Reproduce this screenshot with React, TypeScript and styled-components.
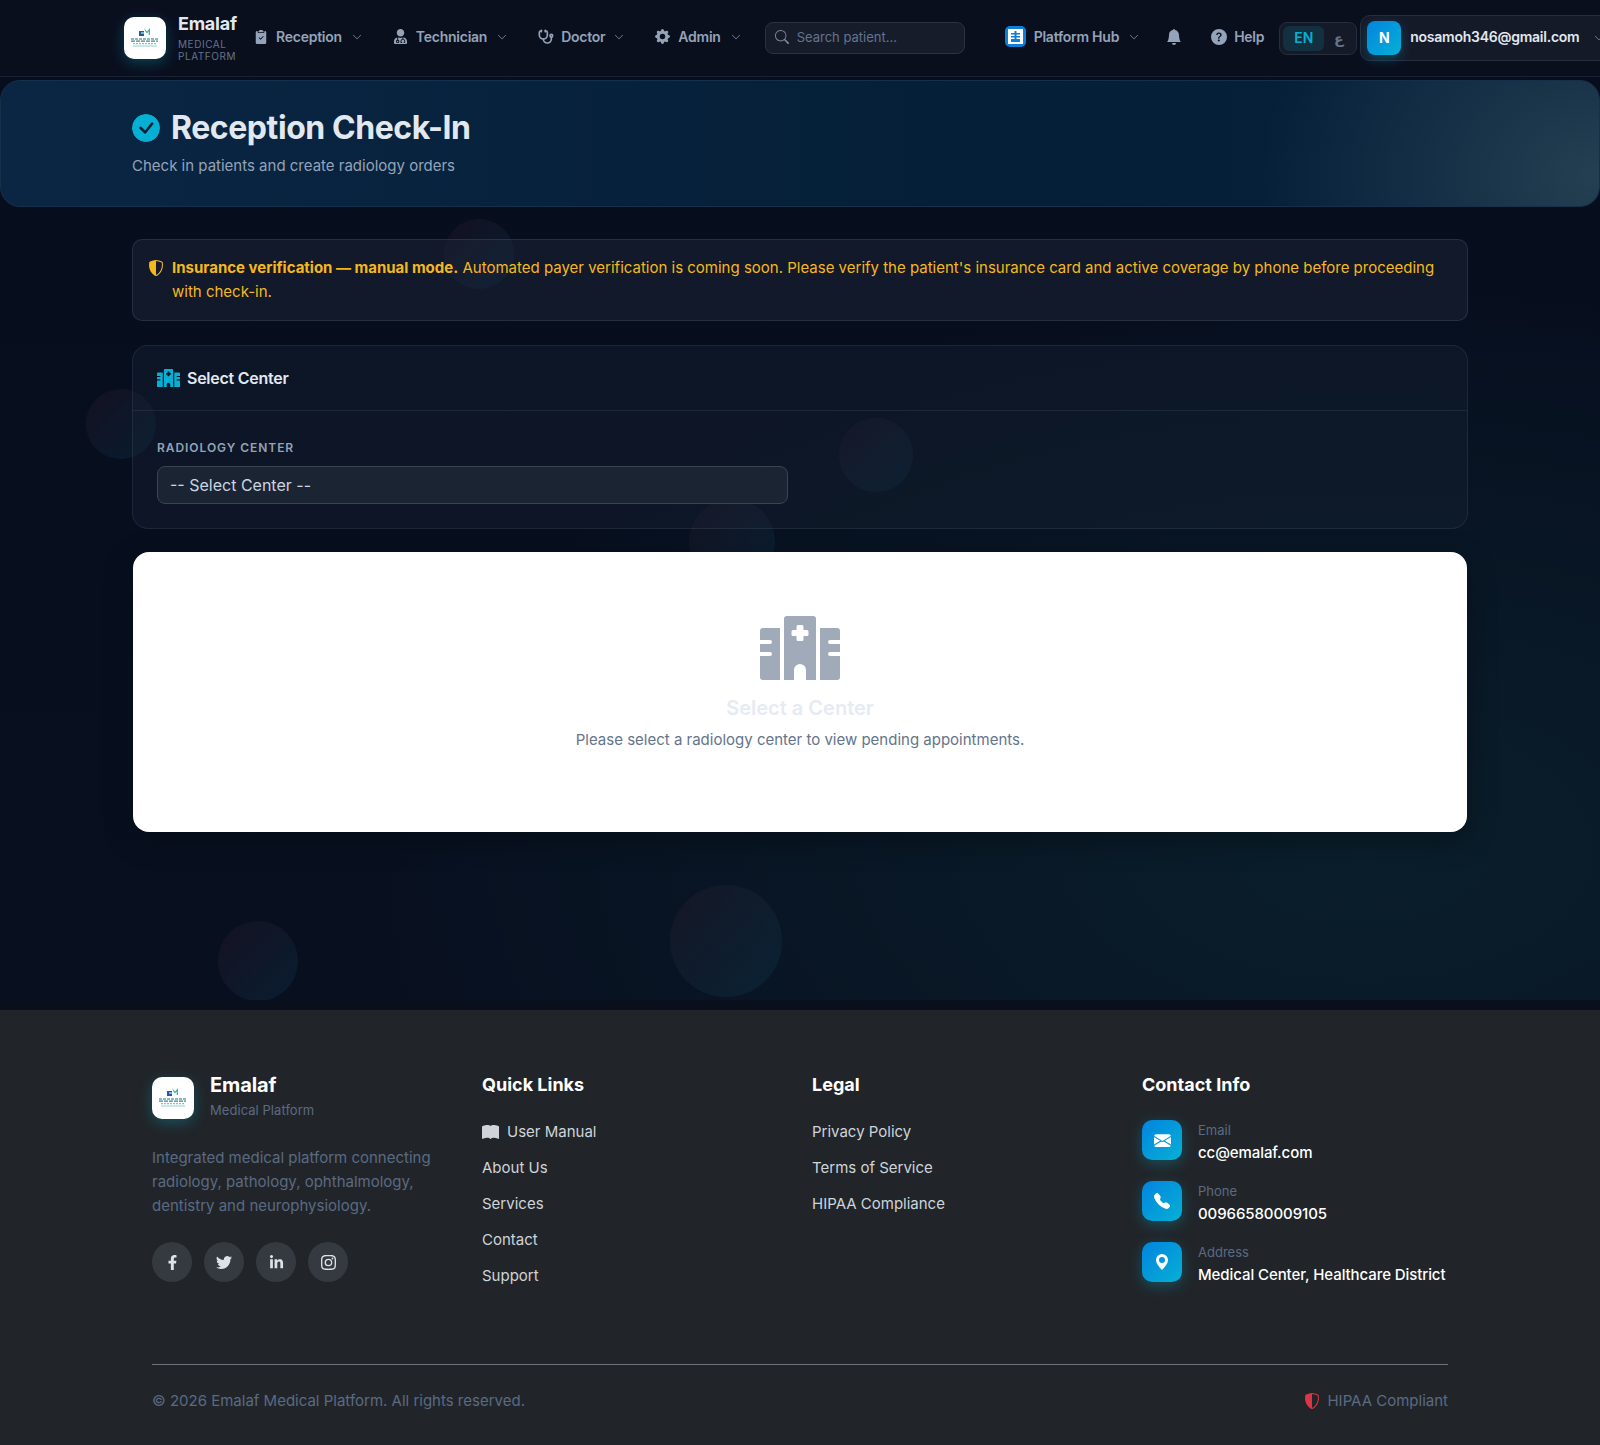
import React from 'react';
import styled, { createGlobalStyle } from 'styled-components';
import {
    BsBellFill,
    BsBookFill,
    BsCheckCircleFill,
    BsChevronDown,
    BsClipboard2CheckFill,
    BsEnvelopeFill,
    BsGearFill,
    BsGeoAltFill,
    BsInstagram,
    BsQuestionCircleFill,
    BsSearch,
    BsShieldShaded,
    BsTelephoneFill,
    BsTwitter,
} from 'react-icons/bs';
import { FaFacebookF, FaLinkedinIn, FaUserMd } from 'react-icons/fa';
import { Stethoscope } from 'lucide-react';

const GlobalStyle = createGlobalStyle`
    * {
        box-sizing: border-box;
    }
    html, body {
        margin: 0;
        padding: 0;
        background: #0a0f1e;
    }
    body {
        font-family: Inter, "Liberation Sans", "DejaVu Sans", sans-serif;
    }
`;

const Shell = styled.div`
    position: relative;
    height: 1000px;
    overflow: hidden;
    background:
        radial-gradient(ellipse 1000px 560px at 85% 85%, #0a1e2b 0%, rgba(10, 30, 43, 0) 100%),
        linear-gradient(180deg, #060e1e 0%, #081020 100%);
`;

const Bubble = styled.div<{ $x: number; $y: number; $r: number }>`
    position: absolute;
    left: ${({ $x, $r }) => $x - $r}px;
    top: ${({ $y, $r }) => $y - $r}px;
    width: ${({ $r }) => $r * 2}px;
    height: ${({ $r }) => $r * 2}px;
    border-radius: 50%;
    background: linear-gradient(135deg, rgba(220, 53, 69, 0.06), rgba(13, 148, 190, 0.1));
`;

const TopBar = styled.header`
    position: relative;
    height: 77px;
    padding-left: 124px;
    display: flex;
    align-items: center;
    background: #0a0f1e;
    border-bottom: 1px solid #1a2233;
    white-space: nowrap;
    overflow: hidden;
`;

const LogoTile = styled.div`
    width: 42px;
    height: 42px;
    flex: none;
    border-radius: 10px;
    background: white;
    display: flex;
    align-items: center;
    justify-content: center;
    box-shadow: 0 4px 14px rgba(6, 182, 212, 0.3);
`;

const Brand = styled.div`
    margin-left: 12px;
    width: 64px;
    flex: none;
    strong {
        display: block;
        font-size: 18px;
        line-height: 20px;
        font-weight: 700;
        letter-spacing: -0.25px;
        color: #e2e8f0;
    }
    span {
        display: block;
        margin-top: 4px;
        font-size: 10px;
        line-height: 12px;
        letter-spacing: 0.55px;
        color: #64748b;
        white-space: normal;
    }
`;

const NavItem = styled.div<{ $gap?: number; $tight?: boolean }>`
    display: flex;
    align-items: center;
    height: 32px;
    padding-bottom: 3px;
    margin-left: ${({ $gap }) => $gap ?? 31}px;
    gap: ${({ $tight }) => ($tight ? 7 : 8)}px;
    font-size: 14px;
    font-weight: 600;
    letter-spacing: -0.25px;
    color: #94a3b8;
    svg {
        flex: none;
    }
`;

const Chevron = styled(BsChevronDown)`
    width: 10px;
    height: 10px;
    margin-left: 2px;
`;

const SearchBox = styled.div`
    width: 200px;
    height: 32px;
    margin-left: 24px;
    flex: none;
    display: flex;
    align-items: center;
    gap: 8px;
    padding: 0 9px 2px;
    border-radius: 8px;
    background: #171c2b;
    border: 1px solid #2b3240;
    font-size: 13px;
    color: #64748b;
    svg {
        color: #7b8798;
    }
`;

const HubTile = styled.div`
    width: 21px;
    height: 21px;
    border-radius: 5px;
    background: #0d7fd8;
    display: flex;
    align-items: center;
    justify-content: center;
`;

const LangSwitch = styled.div`
    margin-left: 15px;
    width: 78px;
    height: 33px;
    flex: none;
    padding: 3px;
    display: flex;
    align-items: center;
    border-radius: 8px;
    background: #141a28;
    border: 1px solid #272e3d;
    font-size: 14px;
    font-weight: 600;
`;

const LangOption = styled.span<{ $active?: boolean }>`
    flex: ${({ $active }) => ($active ? '0 0 41px' : '1')};
    height: 25px;
    padding-bottom: ${({ $active }) => ($active ? 2 : 0)}px;
    display: flex;
    align-items: center;
    justify-content: center;
    border-radius: 6px;
    color: ${({ $active }) => ($active ? '#06b0d4' : '#64748b')};
    background: ${({ $active }) => ($active ? '#12303f' : 'transparent')};
`;

const UserBox = styled.div`
    margin-left: 3px;
    height: 46px;
    width: 300px;
    flex: none;
    padding-left: 6px;
    display: flex;
    align-items: center;
    gap: 9px;
    border-radius: 10px;
    background: #151a29;
    border: 1px solid #272e3d;
    font-size: 14px;
    font-weight: 600;
    letter-spacing: -0.25px;
    color: #e2e8f0;
    svg {
        margin-left: 6px;
        flex: none;
        color: #94a3b8;
    }
`;

const UserEmail = styled.span`
    padding-bottom: 3px;
`;

const Avatar = styled.div`
    width: 34px;
    height: 34px;
    padding-bottom: 2px;
    border-radius: 8px;
    display: flex;
    align-items: center;
    justify-content: center;
    font-weight: 700;
    color: white;
    background: linear-gradient(135deg, #0284e0, #06b0d4);
    box-shadow: 0 4px 12px rgba(6, 176, 212, 0.3);
`;

const Main = styled.main`
    position: relative;
    padding-top: 3px;
`;

const Hero = styled.section`
    height: 127px;
    padding: 28px 131px 0;
    border-radius: 20px;
    border: 1px solid #17304a;
    background:
        radial-gradient(ellipse 340px 260px at 100% 75%, rgba(90, 120, 125, 0.36), rgba(90, 120, 125, 0) 100%),
        linear-gradient(90deg, #0a2643 0%, #051f38 60%, #06203a 100%);
`;

const HeroTitle = styled.h1`
    margin: 0;
    display: flex;
    align-items: center;
    gap: 11px;
    font-size: 32px;
    line-height: 38px;
    font-weight: 700;
    letter-spacing: -0.43px;
    color: #e2e8f0;
    svg {
        color: #06b0d4;
        background: radial-gradient(circle, #0a1f33 45%, transparent 46%);
        border-radius: 50%;
    }
`;

const HeroSub = styled.p`
    margin: 9px 0 0;
    font-size: 15px;
    line-height: 20px;
    color: #94a3b8;
`;

const Content = styled.div`
    width: 1336px;
    margin: 32px auto 0;
    display: flex;
    flex-direction: column;
`;

const Notice = styled.div`
    min-height: 82px;
    padding: 16px 24px 13px 39px;
    position: relative;
    border-radius: 10px;
    background: rgba(30, 41, 59, 0.45);
    border: 1px solid rgba(148, 163, 184, 0.16);
    font-size: 15px;
    line-height: 24px;
    color: #f5b81c;
    svg {
        position: absolute;
        left: 15px;
        top: 20px;
    }
    strong {
        font-weight: 700;
    }
`;

const Panel = styled.section`
    margin-top: 24px;
    height: 184px;
    border-radius: 16px;
    background: rgba(30, 41, 59, 0.28);
    border: 1px solid rgba(148, 163, 184, 0.12);
`;

const PanelHeader = styled.div`
    height: 65px;
    padding-left: 24px;
    display: flex;
    align-items: center;
    gap: 7px;
    border-bottom: 1px solid rgba(148, 163, 184, 0.12);
    font-size: 16px;
    font-weight: 600;
    letter-spacing: -0.25px;
    color: #e2e8f0;
    svg {
        color: #06b0d4;
    }
`;

const PanelBody = styled.div`
    padding: 29px 24px 0;
`;

const FieldLabel = styled.label`
    display: block;
    font-size: 12px;
    line-height: 16px;
    font-weight: 600;
    letter-spacing: 0.95px;
    text-transform: uppercase;
    color: #94a3b8;
`;

const CenterSelect = styled.select`
    display: block;
    margin-top: 10px;
    width: 631px;
    height: 38px;
    padding: 0 12px;
    appearance: none;
    border-radius: 8px;
    background: #1a2433;
    border: 1px solid #3a4454;
    font-family: inherit;
    font-size: 16px;
    color: #cbd5e1;
`;

const EmptyCard = styled.section`
    position: relative;
    margin: 23px 1px 0;
    height: 280px;
    padding-top: 64px;
    border-radius: 16px;
    background: white;
    box-shadow: 0 8px 30px rgba(0, 0, 0, 0.3);
    display: flex;
    flex-direction: column;
    align-items: center;
    svg {
        color: #a0aab8;
    }
    h3 {
        margin: 16px 0 0;
        font-size: 20px;
        line-height: 24px;
        font-weight: 600;
        color: #e6ebf3;
    }
    p {
        margin: 9px 0 0;
        font-size: 15px;
        line-height: 22px;
        color: #64748b;
    }
`;

const Footer = styled.footer`
    margin-top: 10px;
    height: 435px;
    padding-top: 64px;
    background: #212529;
`;

const FooterInner = styled.div`
    width: 1296px;
    margin: 0 auto;
`;

const FooterGrid = styled.div`
    height: 291px;
    display: grid;
    grid-template-columns: repeat(4, 330px);
    border-bottom: 1px solid #6c757d;
`;

const FooterBrand = styled.div`
    display: flex;
    gap: 16px;
    margin-top: 3px;
    strong {
        display: block;
        font-size: 20px;
        line-height: 20px;
        margin-top: -2px;
        font-weight: 700;
        letter-spacing: -0.1px;
        color: white;
    }
    span {
        display: block;
        margin-top: 5px;
        font-size: 13px;
        line-height: 20px;
        letter-spacing: 0.05px;
        color: #5b6a83;
    }
`;

const FooterText = styled.p`
    margin: 26px 0 0;
    width: 290px;
    font-size: 15px;
    line-height: 24px;
    color: #5b6a83;
`;

const Socials = styled.div`
    margin-top: 24px;
    display: flex;
    gap: 12px;
`;

const SocialLink = styled.a`
    width: 40px;
    height: 40px;
    border-radius: 50%;
    display: flex;
    align-items: center;
    justify-content: center;
    background: #343a40;
    color: #dee2e6;
`;

const ColumnTitle = styled.h4`
    margin: 0;
    font-size: 18px;
    line-height: 22px;
    font-weight: 700;
    color: white;
`;

const LinkList = styled.ul`
    list-style: none;
    margin: 26px 0 0;
    padding: 0;
    display: flex;
    flex-direction: column;
    gap: 16px;
`;

const LinkRow = styled.li`
    display: flex;
    align-items: center;
    gap: 8px;
    font-size: 15px;
    line-height: 20px;
    color: #ced4da;
`;

const ContactList = styled.div`
    margin-top: 24px;
    display: flex;
    flex-direction: column;
    gap: 17px;
`;

const ContactRow = styled.div`
    display: flex;
    gap: 16px;
    span {
        display: block;
        font-size: 13px;
        line-height: 20px;
        color: #5b6a83;
    }
    strong {
        display: block;
        margin-top: 2px;
        font-size: 15px;
        line-height: 22px;
        font-weight: 500;
        letter-spacing: -0.08px;
        color: white;
    }
`;

const ContactIcon = styled.div`
    width: 40px;
    height: 40px;
    flex: none;
    border-radius: 10px;
    display: flex;
    align-items: center;
    justify-content: center;
    color: white;
    background: linear-gradient(135deg, #0284e0, #06b0d4);
    box-shadow: 0 4px 14px rgba(6, 176, 212, 0.3);
`;

const FooterBottom = styled.div`
    height: 71px;
    display: flex;
    align-items: center;
    justify-content: space-between;
    font-size: 15px;
    color: #5b6a83;
`;

const Compliance = styled.div`
    display: flex;
    align-items: center;
    gap: 7px;
    svg {
        color: #dc3545;
    }
`;

const LogoMark = () => (
    <svg width="42" height="42" viewBox="0 0 42 42">
        <path d="M15 14h5v1.5h-3v1h3V19h-5z" fill="#1f5c9e" />
        <path d="M20 11l3 3.5 3-3.5v7h-1.3v-3.5l-1.7 2-1.7-2V14z" fill="#3db8a8" />
        <path d="M7 22h27" stroke="#2d6f7f" strokeWidth="1.2" strokeDasharray="3 1" />
        <path d="M7 24.2h27" stroke="#3a8797" strokeWidth="1.2" strokeDasharray="4 1" />
        <path d="M9 26.6h24" stroke="#7cc7c0" strokeWidth="1.2" strokeDasharray="2 1" />
        <path d="M9 29h24" stroke="#a5dbd2" strokeWidth="1.2" />
    </svg>
);

const HubMark = () => (
    <svg width="15" height="15" viewBox="0 0 15 15">
        <rect width="15" height="15" fill="white" />
        <rect x="6.5" y="2" width="2" height="9" fill="#0d7fd8" />
        <rect x="3" y="4" width="9" height="1.5" fill="#0d7fd8" />
        <rect x="3" y="7" width="9" height="1.5" fill="#0d7fd8" />
        <rect x="3" y="10" width="9" height="3" fill="#0d7fd8" />
    </svg>
);

const HospitalMark = ({ width }: { width: number }) => (
    <svg width={width} height={width * 0.8} viewBox="0 0 80 64" fill="currentColor">
        <path d="M3 12H20V64H3a3 3 0 0 1-3-3V40H10a2 2 0 0 0 0-4H0V28H10a2 2 0 0 0 0-4H0V15a3 3 0 0 1 3-3z" />
        <path d="M60 12H77a3 3 0 0 1 3 3V24H70a2 2 0 0 0 0 4H80V36H70a2 2 0 0 0 0 4H80V61a3 3 0 0 1-3 3H60z" />
        <path
            fillRule="evenodd"
            d="M27 0H53a3 3 0 0 1 3 3V64H46V54a6 6 0 0 0-12 0V64H24V3a3 3 0 0 1 3-3zM38 9a1.5 1.5 0 0 0-1.5 1.5V14H33a1.5 1.5 0 0 0-1.5 1.5v3A1.5 1.5 0 0 0 33 20h3.5v3.5A1.5 1.5 0 0 0 38 25h4a1.5 1.5 0 0 0 1.5-1.5V20H47a1.5 1.5 0 0 0 1.5-1.5v-3A1.5 1.5 0 0 0 47 14h-3.5v-3.5A1.5 1.5 0 0 0 42 9z"
        />
    </svg>
);

const bubbles = [
    { x: 479, y: 254, r: 35 },
    { x: 121, y: 424, r: 35 },
    { x: 876, y: 455, r: 37 },
    { x: 732, y: 542, r: 43 },
    { x: 726, y: 941, r: 56 },
    { x: 258, y: 961, r: 40 },
];

const App = () => {
    return (
        <>
            <GlobalStyle />
            <Shell>
                {bubbles.map((b) => (
                    <Bubble key={b.x} $x={b.x} $y={b.y} $r={b.r} />
                ))}
                <TopBar>
                    <LogoTile>
                        <LogoMark />
                    </LogoTile>
                    <Brand>
                        <strong>Emalaf</strong>
                        <span>MEDICAL PLATFORM</span>
                    </Brand>
                    <NavItem $gap={12}>
                        <BsClipboard2CheckFill size={14} />
                        Reception
                        <Chevron />
                    </NavItem>
                    <NavItem>
                        <FaUserMd size={15} />
                        Technician
                        <Chevron />
                    </NavItem>
                    <NavItem $tight>
                        <Stethoscope size={16} strokeWidth={2.5} />
                        Doctor
                        <Chevron />
                    </NavItem>
                    <NavItem>
                        <BsGearFill size={15} />
                        Admin
                        <Chevron />
                    </NavItem>
                    <SearchBox>
                        <BsSearch size={14} />
                        Search patient...
                    </SearchBox>
                    <NavItem $gap={40}>
                        <HubTile>
                            <HubMark />
                        </HubTile>
                        Platform Hub
                        <Chevron />
                    </NavItem>
                    <NavItem $gap={27}>
                        <BsBellFill size={16} />
                    </NavItem>
                    <NavItem $gap={29} $tight>
                        <BsQuestionCircleFill size={16} />
                        Help
                    </NavItem>
                    <LangSwitch>
                        <LangOption $active>EN</LangOption>
                        <LangOption>ع</LangOption>
                    </LangSwitch>
                    <UserBox>
                        <Avatar>N</Avatar>
                        <UserEmail>nosamoh346@gmail.com</UserEmail>
                        <Chevron />
                    </UserBox>
                </TopBar>
                <Main>
                    <Hero>
                        <HeroTitle>
                            <BsCheckCircleFill size={28} />
                            Reception Check-In
                        </HeroTitle>
                        <HeroSub>Check in patients and create radiology orders</HeroSub>
                    </Hero>
                    <Content>
                        <Notice>
                            <BsShieldShaded size={16} />
                            <strong>Insurance verification — manual mode.</strong> Automated payer verification is
                            coming soon. Please verify the patient's insurance card and active coverage by phone
                            before proceeding with check-in.
                        </Notice>
                        <Panel>
                            <PanelHeader>
                                <HospitalMark width={23} />
                                Select Center
                            </PanelHeader>
                            <PanelBody>
                                <FieldLabel htmlFor="center">Radiology Center</FieldLabel>
                                <CenterSelect id="center" defaultValue="">
                                    <option value="">-- Select Center --</option>
                                </CenterSelect>
                            </PanelBody>
                        </Panel>
                        <EmptyCard>
                            <HospitalMark width={80} />
                            <h3>Select a Center</h3>
                            <p>Please select a radiology center to view pending appointments.</p>
                        </EmptyCard>
                    </Content>
                </Main>
            </Shell>
            <Footer>
                <FooterInner>
                    <FooterGrid>
                        <div>
                            <FooterBrand>
                                <LogoTile>
                                    <LogoMark />
                                </LogoTile>
                                <div>
                                    <strong>Emalaf</strong>
                                    <span>Medical Platform</span>
                                </div>
                            </FooterBrand>
                            <FooterText>
                                Integrated medical platform connecting radiology, pathology, ophthalmology, dentistry
                                and neurophysiology.
                            </FooterText>
                            <Socials>
                                <SocialLink>
                                    <FaFacebookF size={15} />
                                </SocialLink>
                                <SocialLink>
                                    <BsTwitter size={16} />
                                </SocialLink>
                                <SocialLink>
                                    <FaLinkedinIn size={15} />
                                </SocialLink>
                                <SocialLink>
                                    <BsInstagram size={15} />
                                </SocialLink>
                            </Socials>
                        </div>
                        <div>
                            <ColumnTitle>Quick Links</ColumnTitle>
                            <LinkList>
                                <LinkRow>
                                    <BsBookFill size={17} />
                                    User Manual
                                </LinkRow>
                                <LinkRow>About Us</LinkRow>
                                <LinkRow>Services</LinkRow>
                                <LinkRow>Contact</LinkRow>
                                <LinkRow>Support</LinkRow>
                            </LinkList>
                        </div>
                        <div>
                            <ColumnTitle>Legal</ColumnTitle>
                            <LinkList>
                                <LinkRow>Privacy Policy</LinkRow>
                                <LinkRow>Terms of Service</LinkRow>
                                <LinkRow>HIPAA Compliance</LinkRow>
                            </LinkList>
                        </div>
                        <div>
                            <ColumnTitle>Contact Info</ColumnTitle>
                            <ContactList>
                                <ContactRow>
                                    <ContactIcon>
                                        <BsEnvelopeFill size={17} />
                                    </ContactIcon>
                                    <div>
                                        <span>Email</span>
                                        <strong>cc@emalaf.com</strong>
                                    </div>
                                </ContactRow>
                                <ContactRow>
                                    <ContactIcon>
                                        <BsTelephoneFill size={16} />
                                    </ContactIcon>
                                    <div>
                                        <span>Phone</span>
                                        <strong>00966580009105</strong>
                                    </div>
                                </ContactRow>
                                <ContactRow>
                                    <ContactIcon>
                                        <BsGeoAltFill size={16} />
                                    </ContactIcon>
                                    <div>
                                        <span>Address</span>
                                        <strong>Medical Center, Healthcare District</strong>
                                    </div>
                                </ContactRow>
                            </ContactList>
                        </div>
                    </FooterGrid>
                    <FooterBottom>
                        <span>© 2026 Emalaf Medical Platform. All rights reserved.</span>
                        <Compliance>
                            <BsShieldShaded size={16} />
                            HIPAA Compliant
                        </Compliance>
                    </FooterBottom>
                </FooterInner>
            </Footer>
        </>
    );
};

export default App;
